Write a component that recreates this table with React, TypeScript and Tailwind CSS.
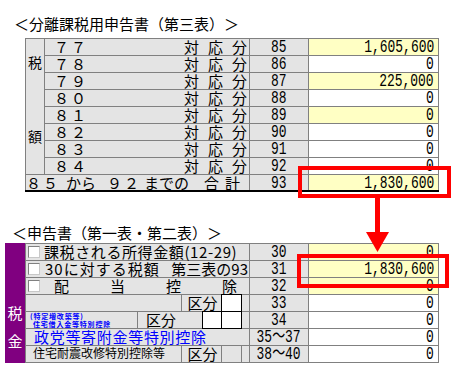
import React from "react";

const JP = "font-['Noto_Sans_CJK_JP',sans-serif]";

function Num({ children, right }: { children: React.ReactNode; right?: boolean }) {
  return (
    <span
      className={
        right
          ? "inline-block origin-right scale-x-[0.72] font-['Liberation_Mono','Noto_Sans_CJK_JP',monospace] text-[18px] leading-[16px] whitespace-nowrap"
          : "inline-block origin-center scale-x-[0.72] font-['Liberation_Mono','Noto_Sans_CJK_JP',monospace] text-[18px] leading-[16px] whitespace-nowrap"
      }
    >
      {children}
    </span>
  );
}

function NumCell({ n }: { n: string }) {
  return (
    <div className="w-[59px] h-full shrink-0 border-r border-[#808080] bg-[#e4e4e4] flex items-center justify-center">
      <Num>{n}</Num>
    </div>
  );
}

function ValCell({ v, y }: { v: string; y?: boolean }) {
  return (
    <div
      className={
        y
          ? "w-[130px] h-full shrink-0 border-r border-[#808080] bg-[#ffffc4] flex items-center justify-end pr-[4px]"
          : "w-[130px] h-full shrink-0 border-r border-[#808080] bg-white flex items-center justify-end pr-[4px]"
      }
    >
      <Num right>{v}</Num>
    </div>
  );
}

function Check() {
  return (
    <div className="ml-[2px] w-[12px] h-[12px] shrink-0 bg-white border-t border-l border-[#808080] border-r border-b border-r-[#c8c8c8] border-b-[#c8c8c8]" />
  );
}

const rows1 = [
  { l: "７７", n: "85", v: "1,605,600", y: true },
  { l: "７８", n: "86", v: "0" },
  { l: "７９", n: "87", v: "225,000", y: true },
  { l: "８０", n: "88", v: "0" },
  { l: "８１", n: "89", v: "0", y: true },
  { l: "８２", n: "90", v: "0" },
  { l: "８３", n: "91", v: "0" },
  { l: "８４", n: "92", v: "0" },
];

export default function App() {
  return (
    <div className={`relative w-[451px] h-[369px] overflow-hidden bg-white text-black ${JP}`}>
      <div className="pt-[15px]">
        <div className="pl-[14px] h-[17px] text-[15px] leading-[17px] whitespace-nowrap">＜分離課税用申告書（第三表）＞</div>

        {/* Table 1 */}
        <div className="mt-[6px] ml-[25px] w-[414px] border-t border-[#808080]">
          <div className="flex">
            <div className="w-[20px] shrink-0 border-l border-r border-b border-[#808080] bg-[#e4e4e4] flex flex-col items-center pt-[15px] gap-[57px] text-[14px] leading-[17px]">
              <span>税</span>
              <span>額</span>
            </div>
            <div className="flex flex-col">
              {rows1.map((r) => (
                <div key={r.n} className="flex h-[17px] border-b border-[#808080]">
                  <div className="w-[205px] h-full shrink-0 border-r border-[#808080] bg-[#e4e4e4] flex items-center justify-between pl-[9px] pr-[2px] text-[15px] leading-[16px]">
                    <span className="tracking-[2px]">{r.l}</span>
                    <span className="flex gap-[9px]">
                      <span>対</span>
                      <span>応</span>
                      <span>分</span>
                    </span>
                  </div>
                  <NumCell n={r.n} />
                  <ValCell v={r.v} y={r.y} />
                </div>
              ))}
            </div>
          </div>
          <div className="flex h-[17px] border-b-2 border-black">
            <div className="w-[225px] h-full shrink-0 border-l border-r border-[#808080] bg-[#e4e4e4] flex items-center text-[15px] leading-[15px] whitespace-nowrap">
              <span className="tracking-[2px]">８５</span>
              <span className="ml-[6px]">から</span>
              <span className="ml-[11px] tracking-[2px]">９２</span>
              <span className="ml-[3px]">までの</span>
              <span className="ml-[15px]">合</span>
              <span className="ml-[6px]">計</span>
            </div>
            <NumCell n="93" />
            <ValCell v="1,830,600" y />
          </div>
        </div>

        <div className="mt-[32px] pl-[12px] h-[17px] text-[15px] leading-[17px] whitespace-nowrap">＜申告書（第一表・第二表）＞</div>

        {/* Table 2 */}
        <div className="mt-[2px] ml-[5px] flex">
          <div className="w-[20px] h-[120px] shrink-0 bg-[#800080] text-white flex flex-col items-center justify-end pb-[14px] gap-[11px] text-[15px] leading-[17px]">
            <span>税</span>
            <span>金</span>
          </div>
          <div className="w-[414px] border-t border-l border-[#808080]">
            {/* row 30 */}
            <div className="flex h-[17px] border-b border-[#808080]">
              <div className="w-[224px] h-full shrink-0 border-r border-[#808080] bg-[#e4e4e4] flex items-center text-[15px] leading-[16px] whitespace-nowrap">
                <Check />
                <span className="ml-[4px] tracking-[0.6px]">課税される所得金額(12-29)</span>
              </div>
              <NumCell n="30" />
              <ValCell v="0" y />
            </div>
            {/* row 31 */}
            <div className="flex h-[17px] border-b border-[#808080]">
              <div className="w-[224px] h-full shrink-0 border-r border-[#808080] bg-[#e4e4e4] flex items-center text-[15px] leading-[16px] whitespace-nowrap">
                <Check />
                <div className="ml-[5px] flex-1 flex justify-between pr-[1px]">
                  <span className="tracking-[1px]">30に対する税額</span>
                  <span>第三表の93</span>
                </div>
              </div>
              <NumCell n="31" />
              <ValCell v="1,830,600" y />
            </div>
            {/* row 32 */}
            <div className="flex h-[17px] border-b border-[#808080]">
              <div className="w-[224px] h-full shrink-0 border-r border-[#808080] bg-[#e4e4e4] flex items-center text-[15px] leading-[16px] whitespace-nowrap">
                <Check />
                <div className="ml-[14px] flex gap-[41px]">
                  <span>配</span>
                  <span>当</span>
                  <span>控</span>
                  <span>除</span>
                </div>
              </div>
              <NumCell n="32" />
              <ValCell v="0" y />
            </div>
            {/* row 33 */}
            <div className="flex h-[17px] border-b border-[#808080]">
              <div className="w-[224px] h-full shrink-0 border-r border-[#808080] bg-[#e4e4e4] flex text-[15px] leading-[16px] whitespace-nowrap">
                <div className="w-[156px] h-full border-r border-[#808080]" />
                <div className="w-[39px] h-full flex items-center justify-center pl-[2px]">区分</div>
                <div className="w-[21px] h-[18px] -mt-[1px] bg-white border border-black" />
                <div className="w-[7px]" />
              </div>
              <NumCell n="33" />
              <ValCell v="0" />
            </div>
            {/* row 34 */}
            <div className="flex h-[17px] border-b border-[#808080]">
              <div className="w-[224px] h-full shrink-0 border-r border-[#808080] bg-[#e4e4e4] flex text-[15px] leading-[16px] whitespace-nowrap">
                <div className="w-[112px] h-full border-r border-[#808080] flex flex-col justify-center text-[#0000ff] font-bold text-[7px] leading-[8px] tracking-[0.8px]">
                  <span className="pl-[4px]">(特定増改築等)</span>
                  <span className="pl-[7px]">住宅借入金等特別控除</span>
                </div>
                <div className="w-[64px] h-full flex items-center pl-[8px]">区分</div>
                <div className="w-[20px] h-[18px] -mt-[1px] bg-white border border-black" />
                <div className="w-[20px] h-[18px] -mt-[1px] bg-white border-t border-r border-b border-black" />
                <div className="w-[7px]" />
              </div>
              <NumCell n="34" />
              <ValCell v="0" />
            </div>
            {/* row 35-37 */}
            <div className="flex h-[17px] border-b border-[#808080]">
              <div className="w-[224px] h-full shrink-0 border-r border-[#808080] bg-[#e4e4e4] flex items-center pl-[8px] text-[#0000ff] text-[15px] leading-[16px] tracking-[0.7px] whitespace-nowrap">
                政党等寄附金等特別控除
              </div>
              <NumCell n="35～37" />
              <ValCell v="0" />
            </div>
            {/* row 38-40 */}
            <div className="flex h-[17px] border-b border-[#808080]">
              <div className="w-[224px] h-full shrink-0 border-r border-[#808080] bg-[#e4e4e4] flex whitespace-nowrap">
                <div className="w-[156px] h-full border-r border-[#808080] pl-[7px] text-[12px] leading-[13px]">住宅耐震改修特別控除等</div>
                <div className="w-[39px] h-full flex items-center justify-center pl-[2px] text-[15px] leading-[16px]">区分</div>
                <div className="w-[21px] h-full border-l border-r border-[#808080]" />
                <div className="w-[7px]" />
              </div>
              <NumCell n="38～40" />
              <ValCell v="0" />
            </div>
          </div>
        </div>
      </div>

      {/* red highlight overlays */}
      <div className="absolute left-[298px] top-[166px] w-[153px] h-[32px] border-4 border-[#ff0000]" />
      <div className="absolute left-[375px] top-[197px] w-[5px] h-[37px] bg-[#ff0000]" />
      <svg className="absolute left-[366px] top-[232px]" width="23" height="20" viewBox="0 0 23 20">
        <polygon points="0,0 23,0 11.5,20" fill="#ff0000" />
      </svg>
      <div className="absolute left-[297px] top-[254px] w-[152px] h-[34px] border-4 border-[#ff0000]" />
    </div>
  );
}
